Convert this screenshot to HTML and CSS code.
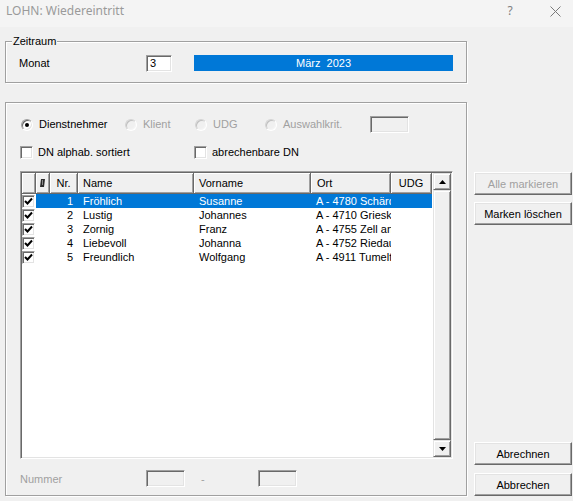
FILE: index.html
```html
<!DOCTYPE html>
<html lang="de">
<head>
    <meta charset="UTF-8">
    <title>LOHN: Wiedereintritt</title>
    <link rel="stylesheet" href="styles.css">
</head>
<body>
    <div class="titlebar">
        <span class="title">LOHN: Wiedereintritt</span>
        <span class="help">?</span>
        <svg class="close" width="11" height="11" viewBox="0 0 11 11">
            <path d="M0.5 0.5 L10.5 10.5 M10.5 0.5 L0.5 10.5" stroke="#7a7a7a" stroke-width="1" fill="none"/>
        </svg>
    </div>

    <div class="dialog">
        <div class="main">
            <div class="group zeitraum">
                <span class="group-title">Zeitraum</span>
                <div class="monat-row">
                    <span class="monat-label">Monat</span>
                    <div class="edit monat-edit">3</div>
                    <div class="monat-bar">März&nbsp;&nbsp;2023</div>
                </div>
            </div>

            <div class="group auswahl">
                <div class="radio-row">
                    <label class="opt opt-dn"><span class="radio checked"></span>Dienstnehmer</label>
                    <label class="opt opt-short off"><span class="radio"></span>Klient</label>
                    <label class="opt opt-short off"><span class="radio"></span>UDG</label>
                    <label class="opt opt-krit off"><span class="radio"></span>Auswahlkrit.</label>
                    <div class="edit edit-off krit-edit"></div>
                </div>

                <div class="check-row">
                    <label class="opt opt-sort"><span class="cb"></span>DN alphab. sortiert</label>
                    <label class="opt"><span class="cb"></span>abrechenbare DN</label>
                </div>

                <div class="list">
                    <div class="grid">
                        <div class="row head">
                            <div class="hc"></div>
                            <div class="hc center">
                                <svg width="5" height="8" viewBox="0 0 5 8"><polygon points="1,0 5,0 4,8 0,8" fill="#2b2b2b"/><rect x="2" y="1" width="1" height="5" fill="#8a8a8a"/></svg>
                            </div>
                            <div class="hc center">Nr.</div>
                            <div class="hc">Name</div>
                            <div class="hc">Vorname</div>
                            <div class="hc ort">Ort</div>
                            <div class="hc center">UDG</div>
                        </div>

                        <div class="row sel">
                            <div class="c chk"><span class="cb"><svg width="11" height="11" viewBox="0 0 11 11"><path d="M2 5 L4.5 7.5 L9 2.5" stroke="#000" stroke-width="2" fill="none"/></svg></span></div>
                            <div class="c"></div>
                            <div class="c nr">1</div>
                            <div class="c">Fröhlich</div>
                            <div class="c">Susanne</div>
                            <div class="c">A - 4780 Schärding</div>
                            <div class="c"></div>
                        </div>
                        <div class="row">
                            <div class="c chk"><span class="cb"><svg width="11" height="11" viewBox="0 0 11 11"><path d="M2 5 L4.5 7.5 L9 2.5" stroke="#000" stroke-width="2" fill="none"/></svg></span></div>
                            <div class="c"></div>
                            <div class="c nr">2</div>
                            <div class="c">Lustig</div>
                            <div class="c">Johannes</div>
                            <div class="c">A - 4710 Grieskirchen</div>
                            <div class="c"></div>
                        </div>
                        <div class="row">
                            <div class="c chk"><span class="cb"><svg width="11" height="11" viewBox="0 0 11 11"><path d="M2 5 L4.5 7.5 L9 2.5" stroke="#000" stroke-width="2" fill="none"/></svg></span></div>
                            <div class="c"></div>
                            <div class="c nr">3</div>
                            <div class="c">Zornig</div>
                            <div class="c">Franz</div>
                            <div class="c">A - 4755 Zell an der Pram</div>
                            <div class="c"></div>
                        </div>
                        <div class="row">
                            <div class="c chk"><span class="cb"><svg width="11" height="11" viewBox="0 0 11 11"><path d="M2 5 L4.5 7.5 L9 2.5" stroke="#000" stroke-width="2" fill="none"/></svg></span></div>
                            <div class="c"></div>
                            <div class="c nr">4</div>
                            <div class="c">Liebevoll</div>
                            <div class="c">Johanna</div>
                            <div class="c">A - 4752 Riedau</div>
                            <div class="c"></div>
                        </div>
                        <div class="row">
                            <div class="c chk"><span class="cb"><svg width="11" height="11" viewBox="0 0 11 11"><path d="M2 5 L4.5 7.5 L9 2.5" stroke="#000" stroke-width="2" fill="none"/></svg></span></div>
                            <div class="c"></div>
                            <div class="c nr">5</div>
                            <div class="c">Freundlich</div>
                            <div class="c">Wolfgang</div>
                            <div class="c">A - 4911 Tumeltsham</div>
                            <div class="c"></div>
                        </div>
                    </div>

                    <div class="vscroll">
                        <div class="sb-btn">
                            <svg width="7" height="4" viewBox="0 0 7 4"><polygon points="3.5,0 7,4 0,4" fill="#000"/></svg>
                        </div>
                        <div class="sb-thumb"></div>
                        <div class="sb-btn">
                            <svg width="7" height="4" viewBox="0 0 7 4"><polygon points="0,0 7,0 3.5,4" fill="#000"/></svg>
                        </div>
                    </div>
                </div>

                <div class="nummer-row">
                    <span class="nummer-label">Nummer</span>
                    <div class="edit edit-off nummer-edit"></div>
                    <span class="dash">-</span>
                    <div class="edit edit-off nummer-edit"></div>
                </div>
            </div>
        </div>

        <div class="side">
            <div class="btn-stack">
                <div class="btn btn-off">Alle markieren</div>
                <div class="btn">Marken löschen</div>
            </div>
            <div class="btn-stack bottom">
                <div class="btn">Abrechnen</div>
                <div class="btn">Abbrechen</div>
            </div>
        </div>
    </div>
</body>
</html>
```

FILE: styles.css
```css
body {
    margin: 0;
    width: 573px;
    height: 501px;
    overflow: hidden;
    background: #f0f0f0;
    font-family: 'Liberation Sans', Arial, sans-serif;
    font-size: 11px;
    color: #000;
}

/* title bar */
.titlebar {
    height: 27px;
    box-sizing: border-box;
    padding: 3px 12px 0 6px;
    display: flex;
    align-items: flex-start;
    background: #f4f4f4;
}
.title {
    flex: 1;
    font-family: 'Noto Sans', 'Open Sans', sans-serif;
    font-size: 12px;
    line-height: 16px;
    color: #9a9a9a;
}
.help {
    width: 16px;
    text-align: center;
    font-family: 'Noto Sans', 'Open Sans', sans-serif;
    font-size: 12px;
    line-height: 16px;
    color: #808080;
}
.close {
    margin: 3px 0 0 32px;
}

/* dialog body */
.dialog {
    display: flex;
    margin-top: 14px;
    padding-left: 5px;
}
.main {
    width: 462px;
}
.side {
    width: 98px;
    margin-left: 7px;
    padding-top: 131px;
    display: flex;
    flex-direction: column;
}
.btn-stack {
    display: flex;
    flex-direction: column;
    gap: 7px;
}
.btn-stack.bottom {
    margin-top: auto;
    gap: 8px;
}
.btn {
    height: 23px;
    box-sizing: border-box;
    border: 1px solid;
    border-color: #fff #696969 #696969 #fff;
    box-shadow: inset -1px -1px 0 #a0a0a0, inset 1px 1px 0 #e3e3e3;
    background: #f0f0f0;
    display: flex;
    align-items: center;
    justify-content: center;
}
.btn-off {
    color: #a0a0a0;
}

/* group boxes */
.group {
    position: relative;
    box-sizing: border-box;
    border: 1px solid #a0a0a0;
    box-shadow: inset 1px 1px 0 #fff, 1px 1px 0 #fff;
}
.group-title {
    position: absolute;
    top: -7px;
    left: 6px;
    padding: 0 1px;
    line-height: 13px;
    background: #f0f0f0;
}
.zeitraum {
    height: 42px;
    padding: 13px 0 0 13px;
}
.auswahl {
    margin-top: 19px;
    height: 394px;
    padding: 13px 0 0 0;
}

.monat-row {
    display: flex;
    align-items: flex-start;
    height: 17px;
}
.monat-label {
    width: 127px;
    line-height: 17px;
}
.monat-edit {
    width: 26px;
    padding-left: 3px;
    line-height: 15px;
}
.monat-bar {
    width: 259px;
    height: 16px;
    margin-left: 22px;
    background: #0078d7;
    color: #fff;
    text-align: center;
    line-height: 16px;
}

/* edit boxes */
.edit {
    box-sizing: border-box;
    height: 17px;
    border: 1px solid;
    border-color: #a0a0a0 #fff #fff #a0a0a0;
    box-shadow: inset 1px 1px 0 #696969, inset -1px -1px 0 #e3e3e3;
    background: #fff;
}
.edit-off {
    background: #f0f0f0;
}

/* radio + checkbox rows */
.radio-row {
    display: flex;
    align-items: center;
    height: 17px;
    padding-left: 15px;
}
.opt {
    display: flex;
    align-items: center;
    gap: 6px;
    line-height: 13px;
}
.opt.off {
    color: #a0a0a0;
}
.opt-dn { width: 104px; }
.opt-short { width: 70px; }
.opt-krit { width: 105px; }
.krit-edit { width: 39px; }

.radio {
    width: 12px;
    height: 12px;
    box-sizing: border-box;
    border-radius: 50%;
    border: 1px solid;
    border-color: #a0a0a0 #fff #fff #a0a0a0;
    box-shadow: inset 1px 1px 0 #696969, inset -1px -1px 0 #e3e3e3;
    background: #fff;
    display: flex;
    align-items: center;
    justify-content: center;
}
.radio.checked::after {
    content: '';
    width: 4px;
    height: 4px;
    border-radius: 50%;
    background: #000;
}
.off .radio {
    background: #f0f0f0;
    border-color: #d4d4d4 #fff #fff #d4d4d4;
    box-shadow: inset 1px 1px 0 #c0c0c0, inset -1px -1px 0 #f4f4f4;
}

.check-row {
    display: flex;
    align-items: center;
    height: 13px;
    margin-top: 13px;
    padding-left: 14px;
}
.check-row .opt { gap: 5px; }
.opt-sort { width: 174px; }

.cb {
    width: 13px;
    height: 13px;
    box-sizing: border-box;
    border: 1px solid;
    border-color: #a0a0a0 #fff #fff #a0a0a0;
    box-shadow: inset 1px 1px 0 #696969, inset -1px -1px 0 #e3e3e3;
    background: #fff;
    display: flex;
}

/* list view */
.list {
    margin: 12px 0 0 14px;
    width: 433px;
    height: 288px;
    box-sizing: border-box;
    border: 1px solid;
    border-color: #a0a0a0 #fff #fff #a0a0a0;
    box-shadow: inset 1px 1px 0 #696969, inset -1px -1px 0 #e3e3e3;
    background: #fff;
    padding: 1px;
    display: flex;
}
.grid {
    width: 410px;
}
.row {
    display: grid;
    grid-template-columns: 14px 14px 28px 116px 117px 80px 41px;
    height: 14px;
}
.row.head {
    height: 21px;
}
.hc {
    box-sizing: border-box;
    background: #f0f0f0;
    border-right: 1px solid #696969;
    border-bottom: 1px solid #696969;
    box-shadow: inset 1px 1px 0 #fff, inset -1px -1px 0 #a0a0a0;
    padding-left: 5px;
    line-height: 20px;
    white-space: nowrap;
    overflow: hidden;
}
.hc.center {
    padding-left: 0;
    display: flex;
    align-items: center;
    justify-content: center;
}
.hc.ort { padding-left: 6px; }

.c {
    padding-left: 5px;
    line-height: 14px;
    white-space: nowrap;
    overflow: hidden;
}
.c.chk {
    padding-left: 0;
    display: flex;
    align-items: center;
}
.c.nr {
    padding: 0 5px 0 0;
    text-align: right;
}
.row.sel .c:not(.chk) {
    background: #0078d7;
    color: #fff;
}

.vscroll {
    width: 18px;
    margin-left: 1px;
    display: flex;
    flex-direction: column;
}
.sb-btn,
.sb-thumb {
    box-sizing: border-box;
    background: #f0f0f0;
    border: 1px solid;
    border-color: #e3e3e3 #696969 #696969 #e3e3e3;
    box-shadow: inset 1px 1px 0 #fff, inset -1px -1px 0 #a0a0a0;
}
.sb-btn {
    height: 17px;
    display: flex;
    align-items: center;
    justify-content: center;
}
.sb-thumb {
    flex: 1;
}

/* bottom number range */
.nummer-row {
    display: flex;
    align-items: center;
    height: 17px;
    margin-top: 11px;
    padding-left: 14px;
    color: #a0a0a0;
}
.nummer-label { width: 126px; }
.nummer-edit { width: 39px; }
.dash {
    width: 57px;
    margin-left: 16px;
}
```
